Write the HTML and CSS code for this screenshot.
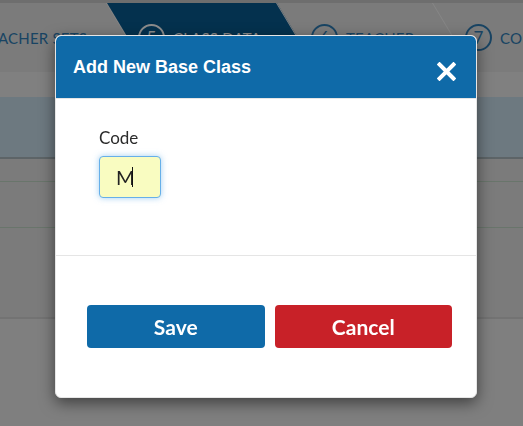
FILE: index.html
```html
<!DOCTYPE html>
<html lang="en">
<head>
    <meta charset="UTF-8">
    <meta name="viewport" content="width=device-width, initial-scale=1.0">
    <title>Add New Base Class</title>
    <link rel="stylesheet" href="styles.css">
</head>
<body>

<div class="page">
    <div class="topbar"></div>
    <nav class="steps">
        <div class="step step-first"><span class="num">4</span><span class="label">TEACHER SETS</span></div>
        <div class="step step-active"><span class="num">5</span><span class="label">CLASS DATA</span></div>
        <div class="step step-six"><span class="num">6</span><span class="label">TEACHER</span></div>
        <div class="step step-last"><span class="num">7</span><span class="label">CONFIRM</span></div>
    </nav>
    <div class="subbar"></div>
    <div class="notice"></div>
    <div class="rows">
        <div class="row row-head"></div>
        <div class="row row-mid"></div>
        <div class="row row-last"></div>
    </div>
</div>

<div class="backdrop"></div>

<div class="modal">
    <div class="modal-header">
        <h2>Add New Base Class</h2>
        <button class="close" type="button" aria-label="Close">
            <svg width="19" height="19" viewBox="0 0 19 19">
                <path d="M2.5 2.5 L16.5 16.5 M16.5 2.5 L2.5 16.5" stroke="#fff" stroke-width="4" stroke-linecap="square" fill="none"/>
            </svg>
        </button>
    </div>
    <div class="modal-body">
        <label for="code">Code</label>
        <div class="field">
            <input type="text" id="code" class="code-input" value="M" autofocus>
            <span class="caret"></span>
        </div>
    </div>
    <div class="modal-footer">
        <button class="btn btn-save" type="button">Save</button>
        <button class="btn btn-cancel" type="button">Cancel</button>
    </div>
</div>

</body>
</html>
```

FILE: styles.css
```css
:root {
    --brand-blue: #0f6aa8;
    --danger-red: #c82128;
    --divider: #e5e5e5;
    --step-text: #2f7db5;
}

body {
    margin: 0;
    height: 100vh;
    overflow: hidden;
    font-family: Lato, "Open Sans", Arial, sans-serif;
    background: #e7e7e7;
}

/* page behind the dialog */
.topbar {
    height: 3px;
    background: #c9c9c9;
}

.steps {
    display: flex;
    height: 69px;
    background: #e0e0e0;
    overflow: hidden;
}

.step {
    position: relative;
    isolation: isolate;
    display: flex;
    align-items: center;
    gap: 8px;
    flex: none;
    box-sizing: border-box;
    color: var(--step-text);
    font-size: 15px;
    letter-spacing: 0.2px;
}

.step::before {
    content: "";
    position: absolute;
    inset: 0;
    z-index: -1;
    transform: skewX(31deg);
    transform-origin: top left;
    border-right: 1px solid #f3f3f3;
}

.step-first {
    width: 170px;
    margin-left: -63px;
    justify-content: flex-end;
    padding-right: 20px;
}

.step-active {
    width: 170px;
    padding-left: 31px;
    color: #fff;
}

.step-active::before {
    background: #09598f;
}

.step-six {
    width: 156px;
    padding-left: 34px;
}

.step-last {
    flex: 1;
    padding-left: 32px;
}

.step-last::before {
    border-right: none;
}

.num {
    display: flex;
    align-items: center;
    justify-content: center;
    width: 27px;
    height: 27px;
    box-sizing: border-box;
    border: 2.5px solid currentColor;
    border-radius: 50%;
    font-size: 17px;
}

.subbar {
    height: 25px;
    background: #e9e9e9;
}

.notice {
    height: 60px;
    background: #c6dde9;
    border-bottom: 2px solid #aab6bc;
}

.row {
    border-bottom: 1px solid #bfd6c3;
    background: #e0e0e0;
}

.row-head {
    height: 22px;
}

.row-mid {
    height: 45px;
}

.row-last {
    height: 89px;
    border-bottom: 2px solid #d2d2d2;
}

.backdrop {
    position: fixed;
    inset: 0;
    background: rgba(0, 0, 0, 0.45);
}

/* dialog */
.modal {
    position: absolute;
    left: 55px;
    top: 35px;
    width: 422px;
    box-sizing: border-box;
    background: #fff;
    border: 1px solid #e6e6e6;
    border-radius: 6px;
    box-shadow: 0 5px 15px rgba(0, 0, 0, 0.5);
    overflow: hidden;
}

.modal-header {
    display: flex;
    align-items: center;
    justify-content: space-between;
    height: 62px;
    padding: 0 20px 0 17px;
    background: var(--brand-blue);
    border-bottom: 1px solid var(--divider);
    border-radius: 5px 5px 0 0;
}

.modal-header h2 {
    margin: 0;
    font-family: "Liberation Sans", Arial, sans-serif;
    font-size: 18px;
    font-weight: bold;
    line-height: 24px;
    color: #fff;
}

.close {
    display: flex;
    padding: 0;
    margin-top: 8px;
    border: none;
    background: none;
    cursor: pointer;
}

.modal-body {
    padding: 29px 43px 57px;
}

.modal-body label {
    display: block;
    margin-bottom: 8px;
    font-size: 17px;
    line-height: 20px;
    color: #2b2b2b;
}

.field {
    position: relative;
    width: 62px;
}

.code-input {
    display: block;
    width: 62px;
    height: 42px;
    box-sizing: border-box;
    padding: 0 0 0 16px;
    font-family: Lato, "Open Sans", Arial, sans-serif;
    font-size: 20px;
    color: #222;
    caret-color: transparent;
    background: #f9fcc1;
    border: 1px solid #66afe9;
    border-radius: 4px;
    outline: none;
    box-shadow: 0 0 6px rgba(102, 175, 233, 0.6);
}

/* text cursor drawn after the typed letter */
.caret {
    position: absolute;
    left: 33px;
    top: 11px;
    width: 1px;
    height: 20px;
    background: #111;
}

.modal-footer {
    display: flex;
    gap: 10px;
    padding: 49px 24px 49px 31px;
    border-top: 1px solid var(--divider);
}

.btn {
    flex: 1;
    height: 43px;
    border: none;
    border-radius: 4px;
    font-family: Lato, "Open Sans", Arial, sans-serif;
    font-size: 21px;
    font-weight: bold;
    color: #fff;
    cursor: pointer;
}

.btn-save {
    background: var(--brand-blue);
}

.btn-cancel {
    background: var(--danger-red);
}
```
